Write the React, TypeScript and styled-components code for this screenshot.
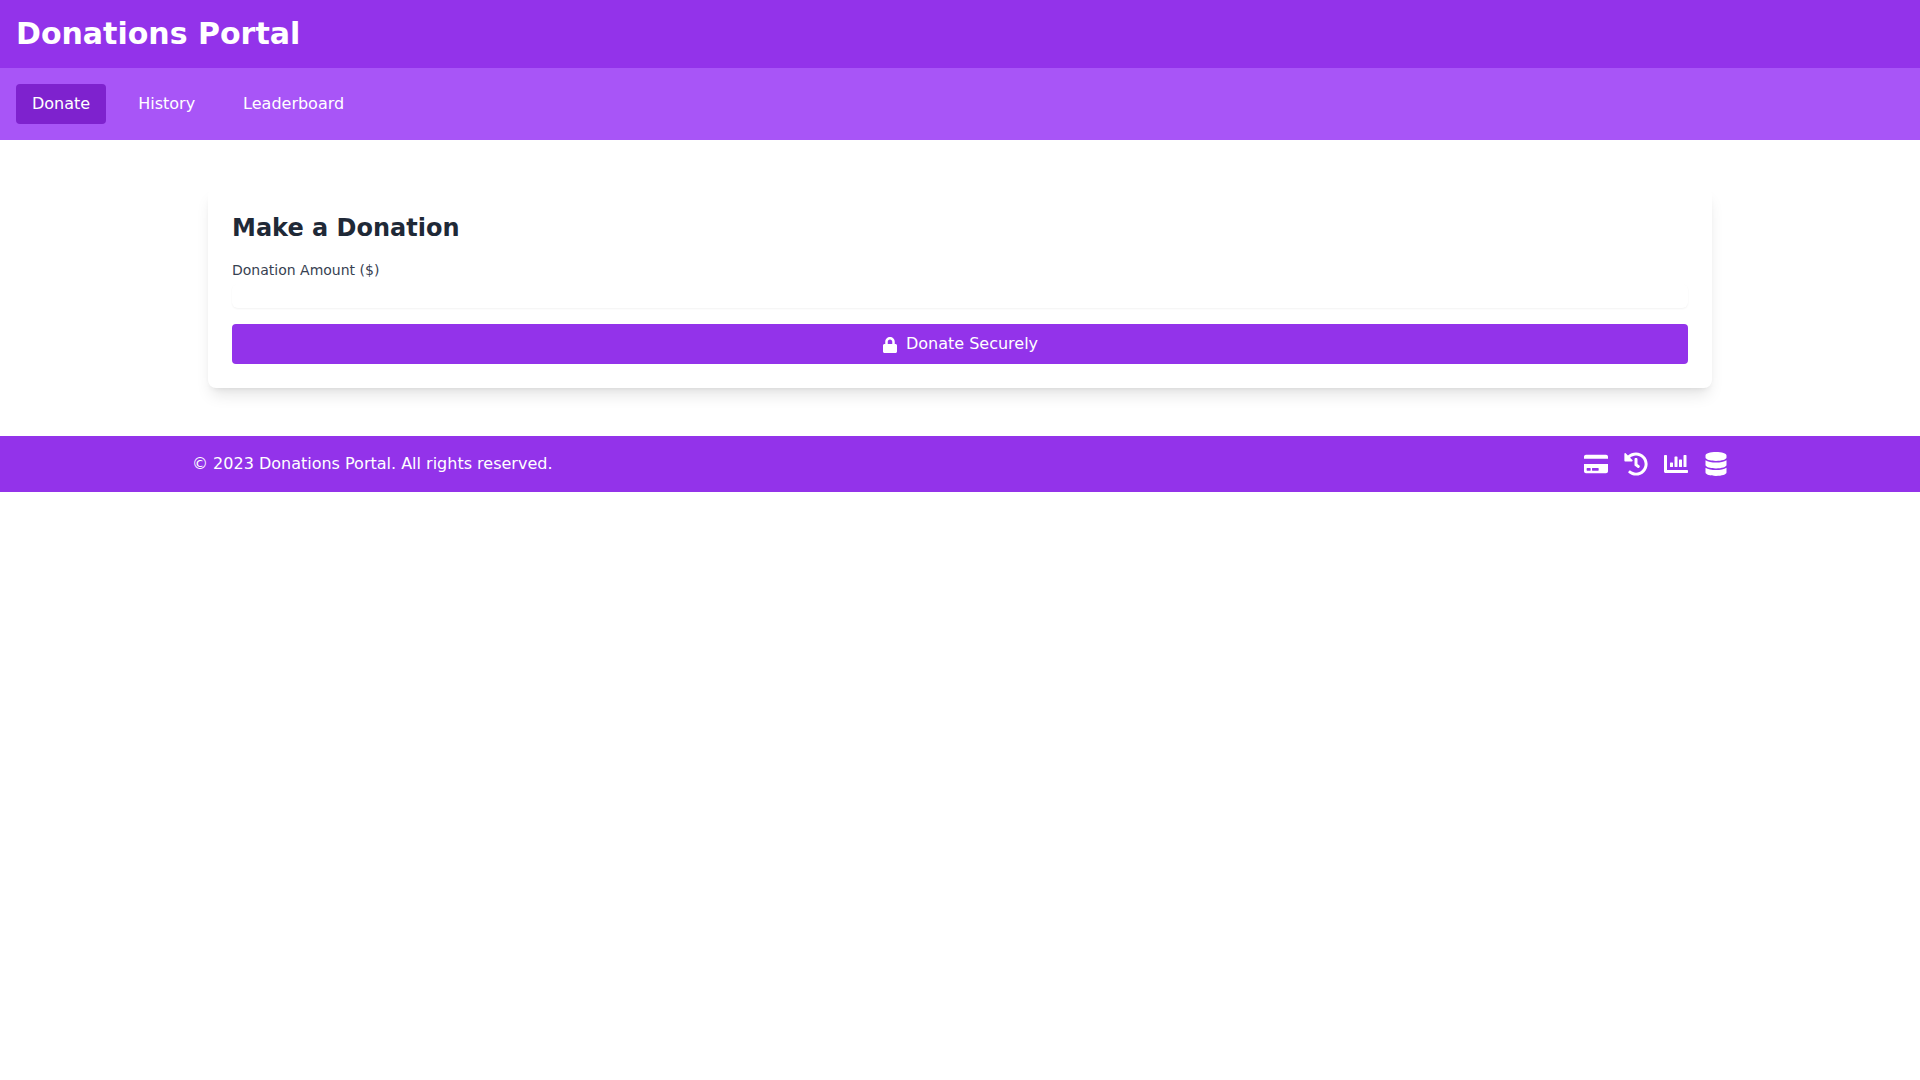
import React, { useState } from 'react';
import styled, { createGlobalStyle } from 'styled-components';
import { FaChartBar, FaCreditCard, FaDatabase, FaHistory, FaLock } from 'react-icons/fa';

const GlobalStyle = createGlobalStyle`
  *, *::before, *::after {
    box-sizing: border-box;
  }
  body {
    margin: 0;
    background: #ffffff;
    font-family: "DejaVu Sans", sans-serif;
    font-size: 16px;
    line-height: 24px;
  }
  button, input {
    font: inherit;
  }
`;

const Header = styled.header`
  padding: 16px;
  background: #9333ea;
  color: #ffffff;
`;

const SiteTitle = styled.h1`
  margin: 0;
  font-size: 30px;
  line-height: 36px;
  font-weight: 700;
`;

const Nav = styled.nav`
  display: flex;
  flex-wrap: wrap;
  gap: 16px;
  padding: 16px;
  background: #a855f7;
`;

const Tab = styled.button<{ $active: boolean }>`
  padding: 8px 16px;
  border: 0;
  border-radius: 4px;
  background: ${({ $active }) => ($active ? '#7e22ce' : 'transparent')};
  color: #ffffff;
  cursor: pointer;
`;

const Main = styled.main`
  max-width: 1536px;
  margin: 0 auto;
  padding: 48px 16px;
`;

const Card = styled.form`
  display: flex;
  flex-direction: column;
  gap: 16px;
  padding: 24px;
  border-radius: 8px;
  background: #ffffff;
  box-shadow: 0 10px 15px -3px rgba(0, 0, 0, 0.1), 0 4px 6px -4px rgba(0, 0, 0, 0.1);
`;

const CardTitle = styled.h2`
  margin: 0;
  color: #1f2937;
  font-size: 24px;
  line-height: 32px;
  font-weight: 700;
`;

const Field = styled.div`
  display: flex;
  flex-direction: column;
  gap: 4px;
`;

const Label = styled.label`
  color: #374151;
  font-size: 14px;
  line-height: 20px;
`;

const AmountInput = styled.input`
  width: 100%;
  height: 24px;
  padding: 0;
  border: 0;
  border-radius: 6px;
  background: #ffffff;
  box-shadow: 0 1px 2px 0 rgba(0, 0, 0, 0.05);
  appearance: textfield;
`;

const SubmitButton = styled.button`
  padding: 8px 16px;
  border: 0;
  border-radius: 4px;
  background: #9333ea;
  color: #ffffff;
  text-align: center;
  cursor: pointer;
`;

const LockIcon = styled(FaLock)`
  margin-right: 8px;
  vertical-align: middle;
`;

const Footer = styled.footer`
  padding: 16px;
  background: #9333ea;
  color: #ffffff;
`;

const FooterContent = styled.div`
  display: flex;
  align-items: center;
  justify-content: space-between;
  max-width: 1536px;
  margin: 0 auto;
`;

const Copyright = styled.p`
  margin: 0;
`;

const IconRow = styled.div`
  display: flex;
  gap: 16px;
  font-size: 24px;
`;

const tabs = ['Donate', 'History', 'Leaderboard'];

export default function App() {
  const [active, setActive] = useState('Donate');
  const [amount, setAmount] = useState('');

  return (
    <>
      <GlobalStyle />
      <Header>
        <SiteTitle>Donations Portal</SiteTitle>
      </Header>
      <Nav>
        {tabs.map((tab) => (
          <Tab key={tab} type="button" $active={tab === active} onClick={() => setActive(tab)}>
            {tab}
          </Tab>
        ))}
      </Nav>
      <Main>
        <Card onSubmit={(event) => event.preventDefault()}>
          <CardTitle>Make a Donation</CardTitle>
          <Field>
            <Label htmlFor="amount">Donation Amount ($)</Label>
            <AmountInput
              id="amount"
              type="number"
              value={amount}
              onChange={(event) => setAmount(event.target.value)}
            />
          </Field>
          <SubmitButton type="submit">
            <LockIcon />
            Donate Securely
          </SubmitButton>
        </Card>
      </Main>
      <Footer>
        <FooterContent>
          <Copyright>© 2023 Donations Portal. All rights reserved.</Copyright>
          <IconRow>
            <FaCreditCard />
            <FaHistory />
            <FaChartBar />
            <FaDatabase />
          </IconRow>
        </FooterContent>
      </Footer>
    </>
  );
}
